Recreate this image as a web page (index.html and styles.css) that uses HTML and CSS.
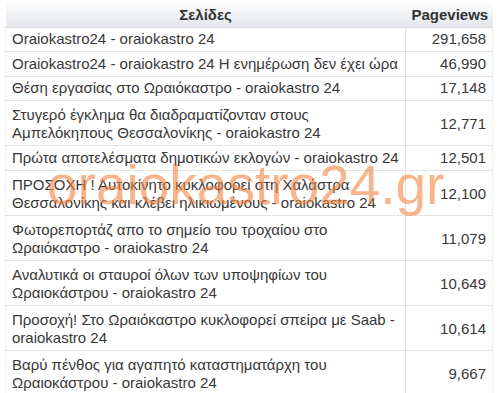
FILE: index.html
```html
<!DOCTYPE html>
<html lang="el">
<head>
<meta charset="utf-8">
<title>Σελίδες</title>
<link rel="stylesheet" href="styles.css">
</head>
<body>
<div class="wrap">
<table class="report">
<thead>
<tr><th class="page">Σελίδες</th><th class="views">Pageviews</th></tr>
</thead>
<tbody>
<tr class="one"><td>Oraiokastro24 - oraiokastro 24</td><td class="num">291,658</td></tr>
<tr class="one"><td>Oraiokastro24 - oraiokastro 24 Η ενημέρωση δεν έχει ώρα</td><td class="num">46,990</td></tr>
<tr class="one"><td>Θέση εργασίας στο Ωραιόκαστρο - oraiokastro 24</td><td class="num">17,148</td></tr>
<tr class="two"><td>Στυγερό έγκλημα θα διαδραματίζονταν στους<br>Αμπελόκηπους Θεσσαλονίκης - oraiokastro 24</td><td class="num">12,771</td></tr>
<tr class="one"><td>Πρώτα αποτελέσματα δημοτικών εκλογών - oraiokastro 24</td><td class="num">12,501</td></tr>
<tr class="two"><td>ΠΡΟΣΟΧΗ ! Αυτοκίνητο κυκλοφορεί στη Χαλάστρα<br>Θεσσαλονίκης και κλέβει ηλικιωμένους - oraiokastro 24</td><td class="num">12,100</td></tr>
<tr class="two"><td>Φωτορεπορτάζ απο το σημείο του τροχαίου στο<br>Ωραιόκαστρο - oraiokastro 24</td><td class="num">11,079</td></tr>
<tr class="two"><td>Αναλυτικά οι σταυροί όλων των υποψηφίων του<br>Ωραιοκάστρου - oraiokastro 24</td><td class="num">10,649</td></tr>
<tr class="two"><td>Προσοχή! Στο Ωραιόκαστρο κυκλοφορεί σπείρα με Saab -<br>oraiokastro 24</td><td class="num">10,614</td></tr>
<tr class="two"><td>Βαρύ πένθος για αγαπητό καταστηματάρχη του<br>Ωραιοκάστρου - oraiokastro 24</td><td class="num">9,667</td></tr>
</tbody>
</table>
<div class="watermark">oraiokastro24.gr</div>
</div>
</body>
</html>
```
FILE: styles.css
```css
html, body {
  margin: 0;
  padding: 0;
  background: #ffffff;
}
body {
  padding: 3px 5px 0 5px;
  font-family: "Liberation Sans", Arial, sans-serif;
  color: #383838;
  overflow: hidden;
}
.wrap {
  position: relative;
  width: 488px;
}
.report {
  width: 488px;
  border-collapse: collapse;
  table-layout: fixed;
  font-size: 15px;
  line-height: 18px;
}
.report th {
  background: linear-gradient(#fdfdfe, #e3e6ea);
  font-weight: bold;
  height: 24px;
  padding: 0 6px;
  border-bottom: 1px solid #dcdcdc;
  box-sizing: border-box;
  color: #333333;
}
.report th.page {
  width: 400px;
  text-align: center;
}
.report th.views {
  text-align: right;
}
.report td {
  padding: 4px 6px;
  border-bottom: 1px solid #e3e3e3;
  vertical-align: middle;
  white-space: nowrap;
}
.report tr.one td {
  padding-top: 2.75px;
  padding-bottom: 2.75px;
}
.report tr.two td {
  padding-top: 5px;
  padding-bottom: 3px;
}
.report td:first-child {
  border-left: 1px solid #efefef;
}
.report td.num {
  text-align: right;
  border-left: 1px solid #e3e3e3;
  border-right: 1px solid #efefef;
}
.watermark {
  position: absolute;
  left: 42px;
  top: 155px;
  font-family: "Liberation Sans", Arial, sans-serif;
  font-size: 55px;
  line-height: 55px;
  color: rgba(244, 130, 60, 0.6);
  white-space: nowrap;
  pointer-events: none;
}
```
